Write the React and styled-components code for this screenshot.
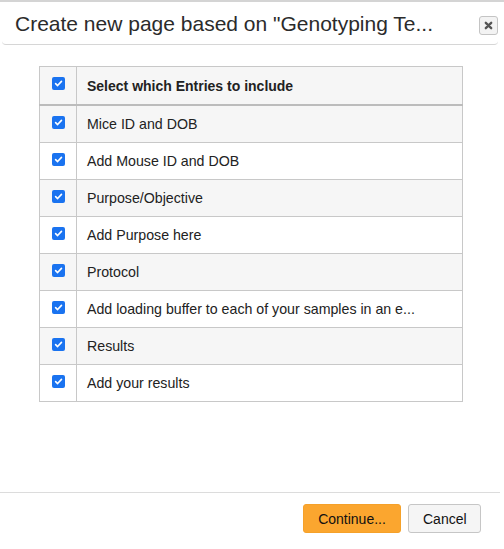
import React from 'react';
import styled, { createGlobalStyle } from 'styled-components';

const GlobalStyle = createGlobalStyle`
  html, body {
    margin: 0;
    padding: 0;
    background: #fff;
  }
  body {
    font-family: "Liberation Sans", Arial, sans-serif;
    color: #333;
  }
`;

const Dialog = styled.div`
  width: 504px;
  height: 549px;
  display: flex;
  flex-direction: column;
  border-top: 2px solid #d4d4d4;
  box-sizing: border-box;
`;

const Header = styled.div`
  height: 43px;
  margin: 0 6px 0 2px;
  display: flex;
  align-items: center;
  justify-content: space-between;
  padding: 0 0 0 13px;
  border-bottom: 1px solid #d6d6d6;
  border-radius: 0 0 4px 4px;
  box-sizing: border-box;
`;

const Title = styled.h1`
  margin: 0;
  font-size: 21px;
  font-weight: normal;
  color: #2b2b2b;
  padding-top: 2px;
`;

const CloseButton = styled.button`
  width: 19px;
  height: 19px;
  padding: 0;
  border: 1px solid #c4c4c4;
  border-radius: 3px;
  background: #f3f3f3;
  display: flex;
  align-items: center;
  justify-content: center;
  margin-top: 5px;
`;

const Body = styled.div`
  flex: 1;
  padding: 21px 41px 0 39px;
`;

const Table = styled.table`
  width: 100%;
  border-collapse: collapse;
  font-size: 14px;
  color: #222;
`;

const HeadCell = styled.th`
  height: 37px;
  border: 1px solid #c8c8c8;
  border-bottom: 2px solid #bcbcbc;
  background: #f6f6f6;
  text-align: ${p => (p.$center ? 'center' : 'left')};
  padding: ${p => (p.$center ? '0' : '0 10px')};
  width: ${p => (p.$center ? '36px' : 'auto')};
  font-weight: bold;
  font-size: 14px;
  color: #222;
`;

const Row = styled.tr`
  background: ${p => (p.$striped ? '#f6f6f6' : '#fff')};
`;

const Cell = styled.td`
  height: 36px;
  border: 1px solid #c8c8c8;
  text-align: ${p => (p.$center ? 'center' : 'left')};
  padding: ${p => (p.$center ? '0' : '0 10px')};
  white-space: nowrap;
  font-size: 14.2px;
`;

const Check = styled.span`
  display: inline-flex;
  align-items: center;
  justify-content: center;
  width: 13px;
  height: 13px;
  border-radius: 2px;
  background: #1a73f0;
  vertical-align: middle;
  margin-top: -6px;
`;

const Footer = styled.div`
  height: 57px;
  border-top: 1px solid #dcdcdc;
  margin-right: 4px;
  display: flex;
  align-items: flex-start;
  justify-content: flex-end;
  gap: 7px;
  padding: 11px 19px 0 0;
  box-sizing: border-box;
`;

const Button = styled.button`
  height: 29px;
  padding: 0 14px;
  font-family: "Liberation Sans", Arial, sans-serif;
  font-size: 14px;
  color: #111;
  border-radius: 3px;
  border: 1px solid ${p => (p.$primary ? '#f5a12a' : '#c6c6c6')};
  background: ${p => (p.$primary ? '#fba62f' : '#f5f5f5')};
  width: ${p => (p.$primary ? '98px' : '73px')};
`;

const entries = [
  'Mice ID and DOB',
  'Add Mouse ID and DOB',
  'Purpose/Objective',
  'Add Purpose here',
  'Protocol',
  'Add loading buffer to each of your samples in an e...',
  'Results',
  'Add your results',
];

function CheckMark() {
  return (
    <Check>
      <svg width="9" height="9" viewBox="0 0 10 10">
        <path d="M1.8 5.2 L4 7.3 L8.3 2.6" fill="none" stroke="#fff" strokeWidth="1.8" strokeLinecap="round" strokeLinejoin="round" />
      </svg>
    </Check>
  );
}

export default function App() {
  return (
    <>
      <GlobalStyle />
      <Dialog>
        <Header>
          <Title>Create new page based on "Genotyping Te...</Title>
          <CloseButton aria-label="close">
            <svg width="9" height="9" viewBox="0 0 10 10">
              <path d="M2 2 L8 8 M8 2 L2 8" stroke="#555" strokeWidth="2.6" strokeLinecap="round" />
            </svg>
          </CloseButton>
        </Header>
        <Body>
          <Table>
            <thead>
              <tr>
                <HeadCell $center><CheckMark /></HeadCell>
                <HeadCell>Select which Entries to include</HeadCell>
              </tr>
            </thead>
            <tbody>
              {entries.map((e, i) => (
                <Row key={i} $striped={i % 2 === 0}>
                  <Cell $center><CheckMark /></Cell>
                  <Cell>{e}</Cell>
                </Row>
              ))}
            </tbody>
          </Table>
        </Body>
        <Footer>
          <Button $primary>Continue...</Button>
          <Button>Cancel</Button>
        </Footer>
      </Dialog>
    </>
  );
}
